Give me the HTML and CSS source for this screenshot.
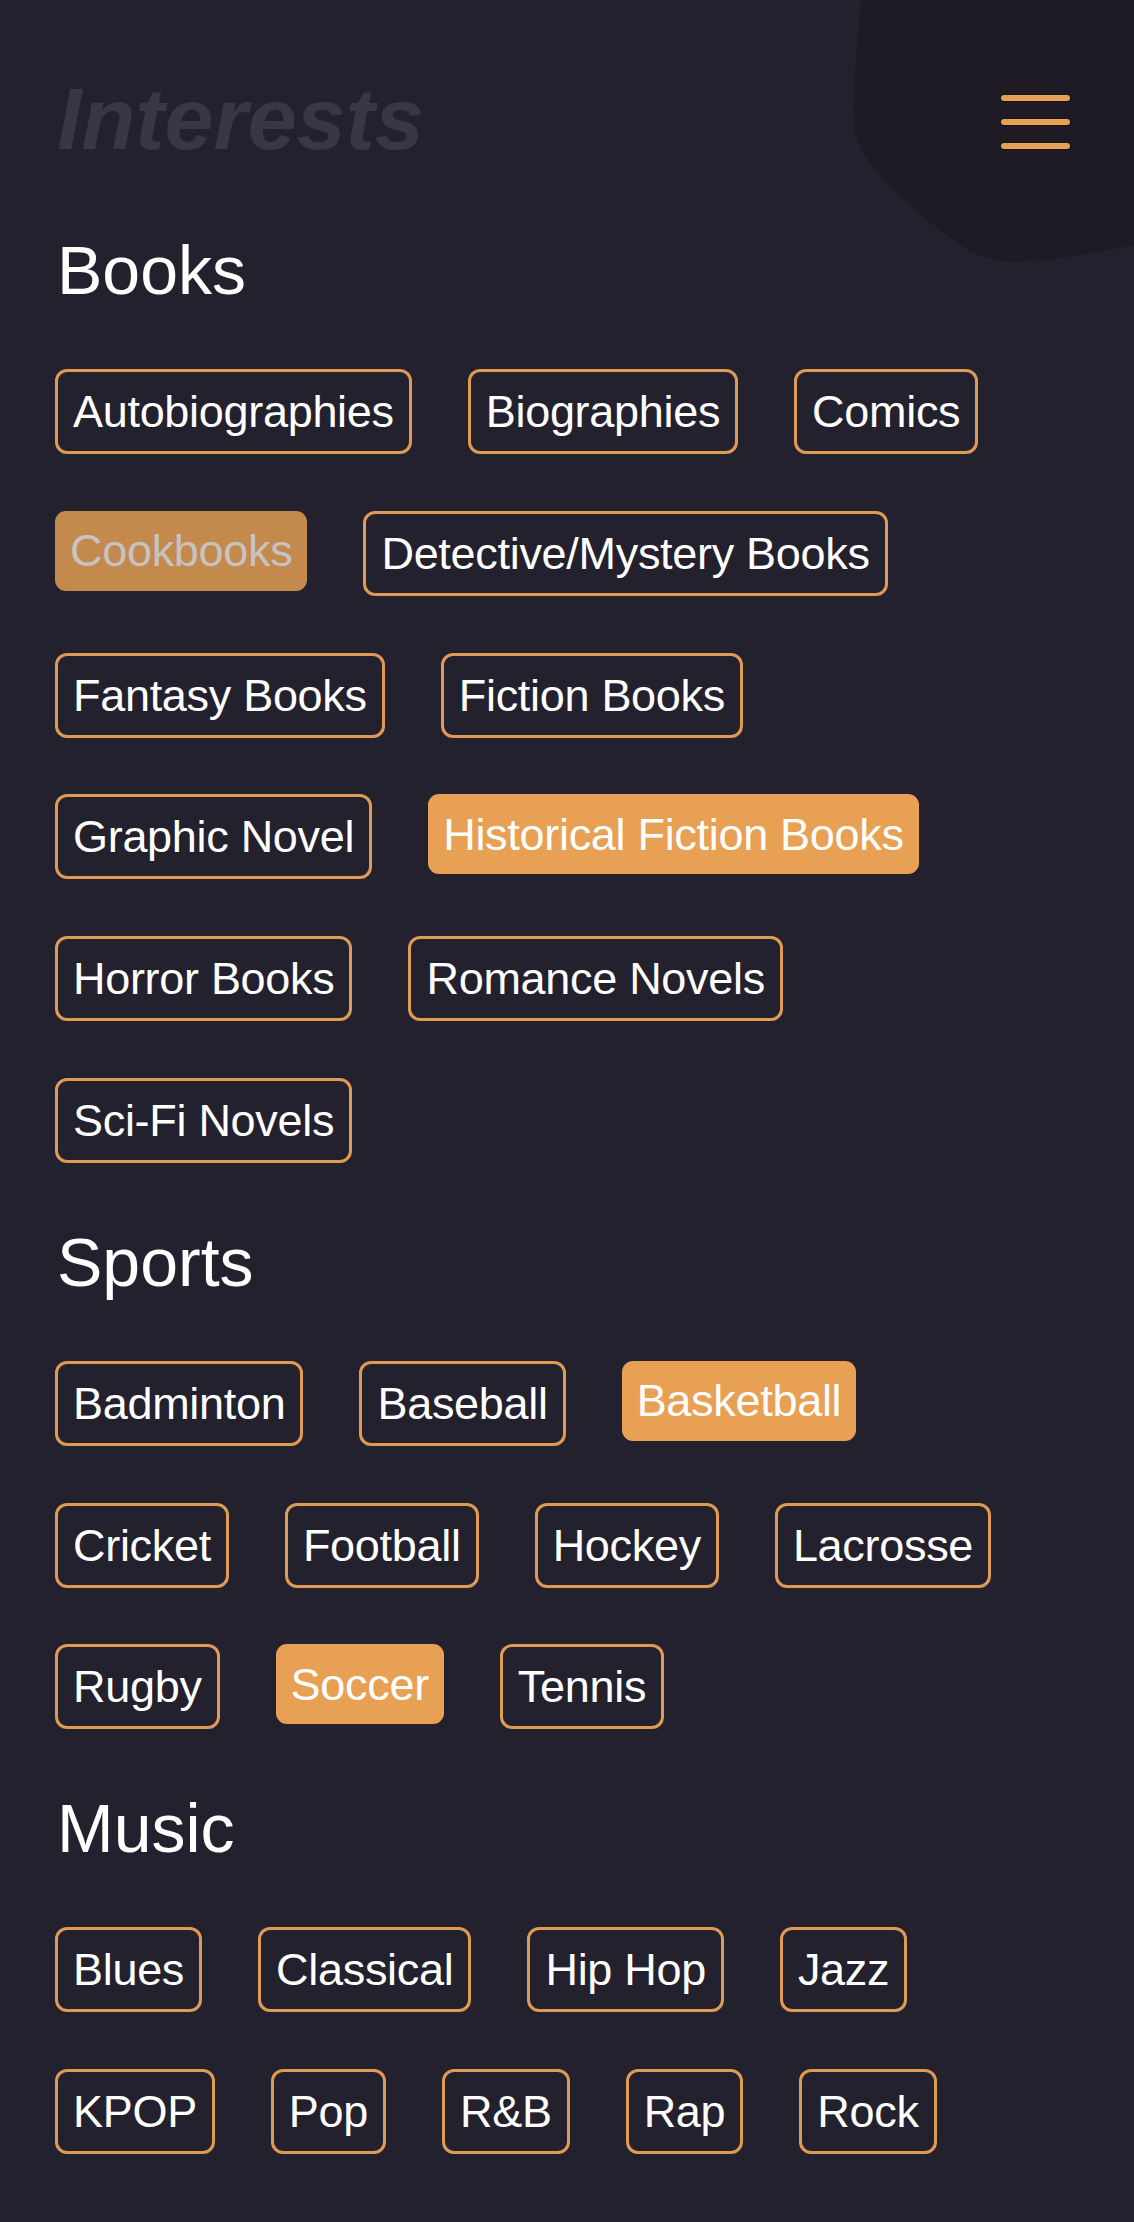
FILE: index.html
```html
<!DOCTYPE html>
<html lang="en">
<head>
<meta charset="utf-8">
<title>Interests</title>
<link rel="stylesheet" href="styles.css">
</head>
<body>
<div class="page">
  <svg class="blob" width="294" height="270" viewBox="840 0 294 270" aria-hidden="true">
    <path d="M861 0 C858 40 852 90 854 125 C856 150 880 180 910 205 C945 235 975 262 1013 262 C1060 260 1100 252 1134 245 L1134 0 Z" fill="#1e1b25"/>
  </svg>
  <header class="header">
    <h1 class="title">Interests</h1>
    <button class="menu" aria-label="Menu">
      <span class="bar"></span><span class="bar"></span><span class="bar"></span>
    </button>
  </header>

  <section class="section">
    <h2 class="heading">Books</h2>
    <div class="chips">
      <span class="chip">Autobiographies</span>
      <span class="chip">Biographies</span>
      <span class="chip">Comics</span>
      <span class="chip selected dim">Cookbooks</span>
      <span class="chip">Detective/Mystery Books</span>
      <span class="chip">Fantasy Books</span>
      <span class="chip">Fiction Books</span>
      <span class="chip">Graphic Novel</span>
      <span class="chip selected">Historical Fiction Books</span>
      <span class="chip">Horror Books</span>
      <span class="chip">Romance Novels</span>
      <span class="chip">Sci-Fi Novels</span>
    </div>
  </section>

  <section class="section">
    <h2 class="heading">Sports</h2>
    <div class="chips">
      <span class="chip">Badminton</span>
      <span class="chip">Baseball</span>
      <span class="chip selected">Basketball</span>
      <span class="chip">Cricket</span>
      <span class="chip">Football</span>
      <span class="chip">Hockey</span>
      <span class="chip">Lacrosse</span>
      <span class="chip">Rugby</span>
      <span class="chip selected">Soccer</span>
      <span class="chip">Tennis</span>
    </div>
  </section>

  <section class="section">
    <h2 class="heading">Music</h2>
    <div class="chips">
      <span class="chip">Blues</span>
      <span class="chip">Classical</span>
      <span class="chip">Hip Hop</span>
      <span class="chip">Jazz</span>
      <span class="chip">KPOP</span>
      <span class="chip">Pop</span>
      <span class="chip">R&amp;B</span>
      <span class="chip">Rap</span>
      <span class="chip">Rock</span>
    </div>
  </section>
</div>
</body>
</html>
```

FILE: styles.css
```css
* { box-sizing: border-box; }

html, body {
  margin: 0;
  padding: 0;
  background: #24212e;
}

body {
  font-family: "Liberation Sans", Arial, sans-serif;
  color: #ffffff;
}

.page {
  position: relative;
  min-height: 2222px;
  padding: 75px 55px 0 55px;
  overflow: hidden;
}

.blob {
  position: absolute;
  top: 0;
  right: 0;
  z-index: 0;
}

.header {
  position: relative;
  z-index: 1;
  display: flex;
  justify-content: space-between;
  align-items: center;
  padding-right: 9px;
}

.title {
  margin: 0;
  font-size: 88px;
  line-height: 88px;
  font-weight: 700;
  font-style: italic;
  color: #3a3744;
  padding-left: 2px;
}

.menu {
  display: flex;
  flex-direction: column;
  gap: 18px;
  padding: 0;
  margin-top: 5px;
  background: none;
  border: none;
}

.bar {
  display: block;
  width: 69px;
  height: 6px;
  border-radius: 3px;
  background: #e8a055;
  box-shadow: 0 0 2px rgba(0, 0, 0, 0.7);
}

.section {
  position: relative;
  z-index: 1;
  margin-top: 65px;
}

.header + .section {
  margin-top: 73px;
}

.heading {
  margin: 0 0 65px 0;
  font-size: 68px;
  line-height: 68px;
  font-weight: 400;
  padding-left: 2px;
}

.chips {
  display: flex;
  flex-wrap: wrap;
  align-items: flex-start;
  gap: 56.75px 56px;
  padding-right: 45px;
}

.chip {
  display: inline-flex;
  align-items: center;
  height: 85px;
  padding: 0 15px;
  border: 3px solid #df9a56;
  border-radius: 12px;
  font-size: 45px;
  line-height: 1;
  letter-spacing: -0.3px;
  color: #ffffff;
  white-space: nowrap;
}

.chip.selected {
  height: 80px;
  border: none;
  background: #e8a055;
  border-radius: 11px;
}

.chip.dim {
  opacity: 0.82;
  color: #ece6e2;
}
```
